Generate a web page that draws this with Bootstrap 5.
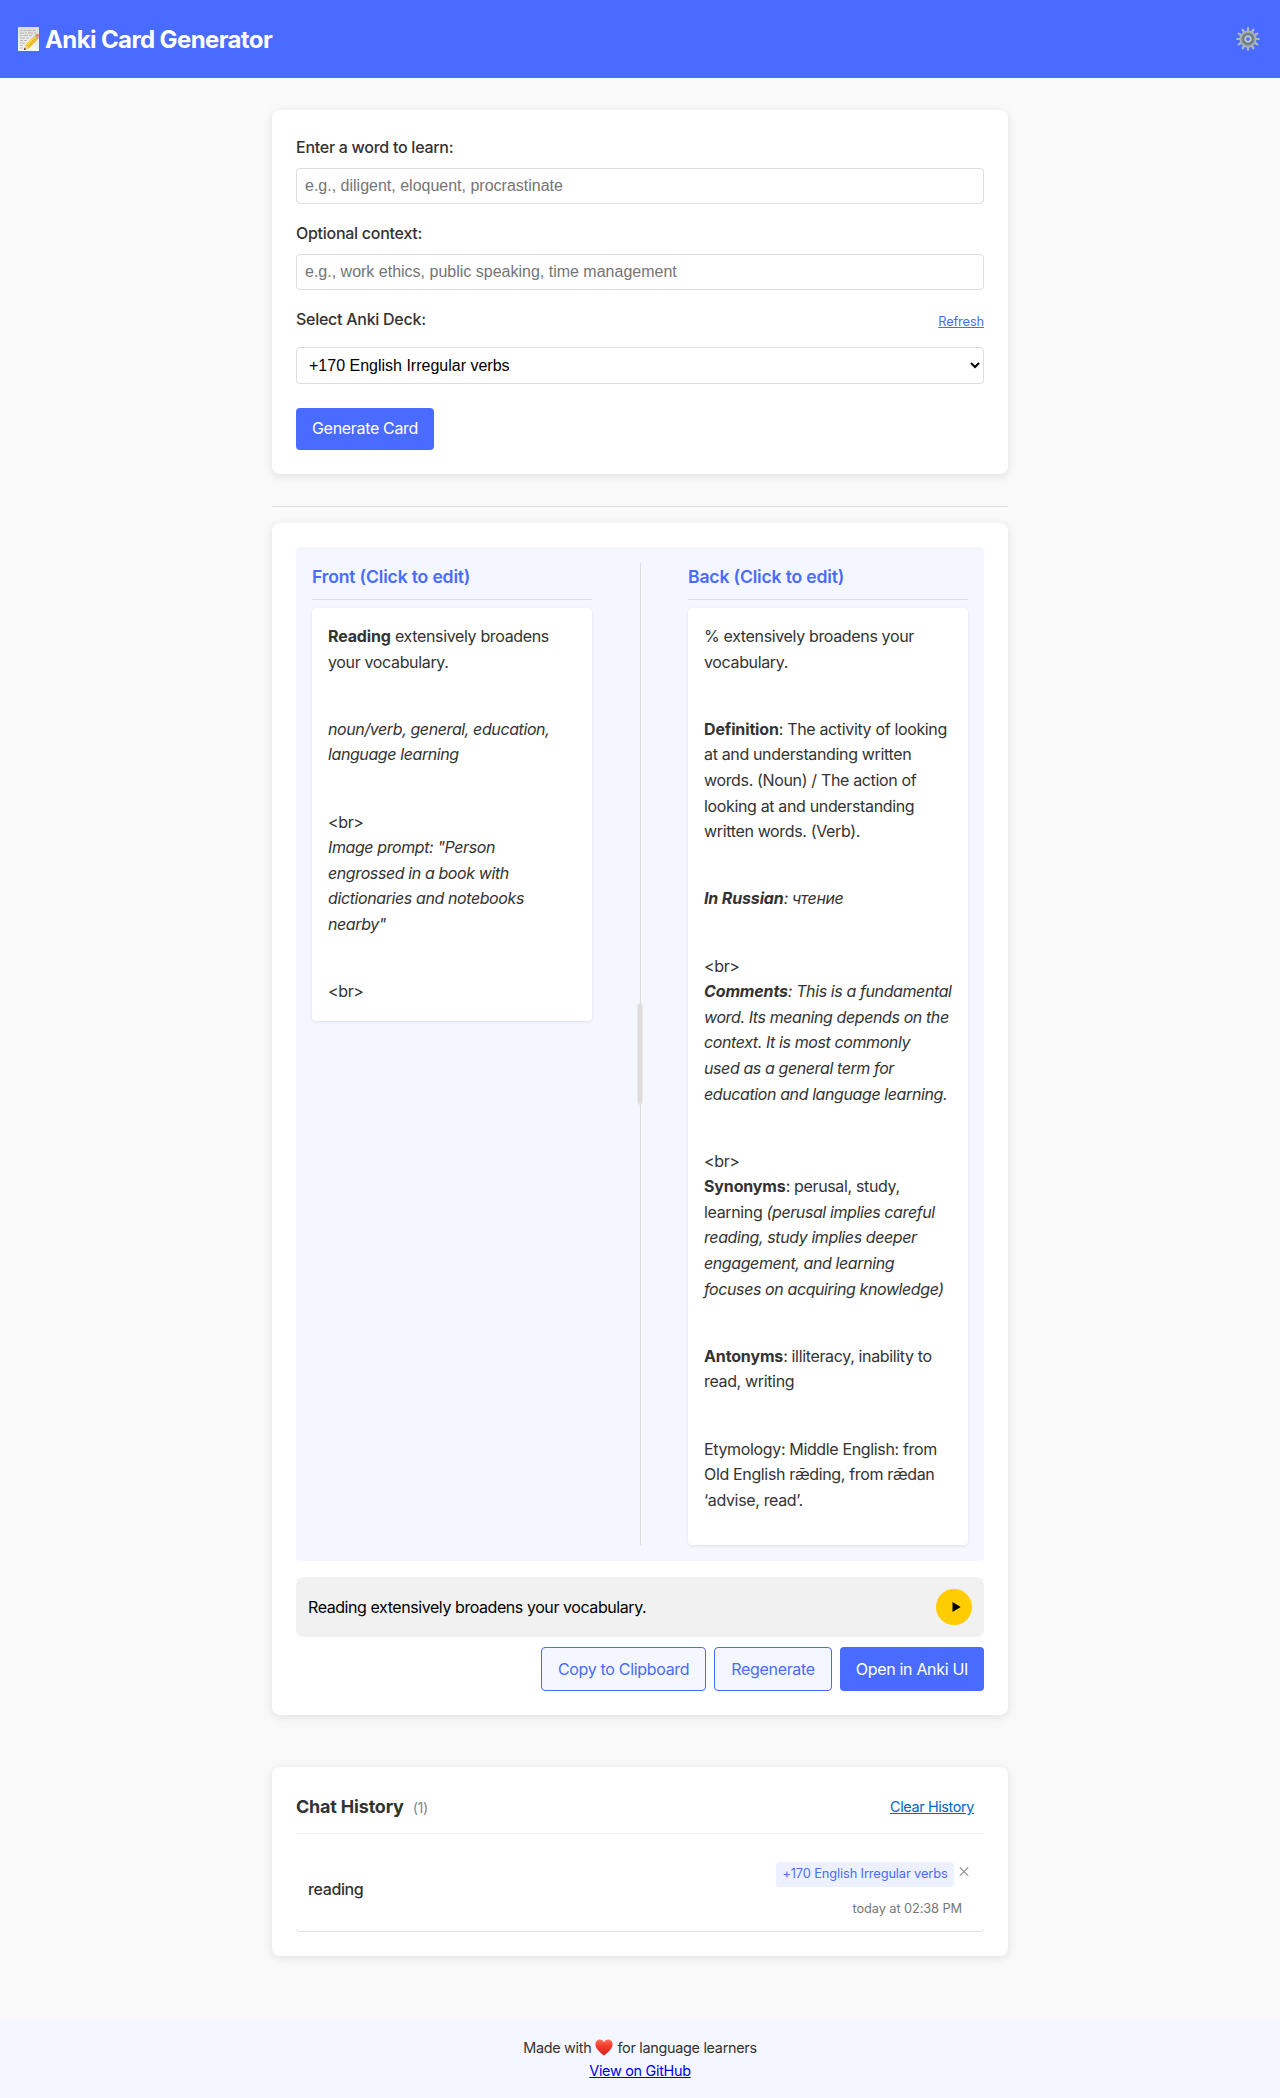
<!DOCTYPE html>
<html lang="en">
<head>
<meta charset="utf-8">
<meta name="viewport" content="width=device-width, initial-scale=1">
<title>Anki Card Generator</title>
<link href="https://cdn.jsdelivr.net/npm/bootstrap@5.3.0/dist/css/bootstrap.min.css" rel="stylesheet">
<style>
:root{--brand:#4a6bff;--pale:#f4f7ff;--line:#ddd}
body{font-family:Inter,"Noto Sans",sans-serif;font-size:16px;line-height:1.6;color:#333;background:#f9f9f9;letter-spacing:-.38px}
.app-header{background:var(--brand);height:78px;padding:0 16px}
.app-title{font-size:24px;font-weight:700;letter-spacing:-.61px;line-height:38px;gap:6px}
.app-title span{padding-top:2px}
.main-col{width:736px;padding-top:32px}
.panel-card{background:#fff;border-radius:8px;padding:24px;box-shadow:0 2px 10px rgba(0,0,0,.1)}
.field-label{font-weight:500;letter-spacing:-.27px;line-height:26px;margin-bottom:8px;display:block}
.field-box{font-family:"Liberation Sans",sans-serif;font-size:16px;line-height:18px;height:36px;padding:8px;border:1px solid var(--line);border-radius:4px;letter-spacing:0;display:block;width:100%;background:#fff;color:#000}
.field-box::placeholder{color:#757575;opacity:1}
select.field-box{height:37px;line-height:normal;margin-top:7px}
.refresh-link{font-size:12.8px;letter-spacing:-.13px;color:var(--brand);line-height:20px;margin-top:6px}
.btn-app{background:var(--brand);color:#fff;border:0;border-radius:4px;padding:0 16px 2px;height:42px;font-size:16px;letter-spacing:-.32px;line-height:1;white-space:nowrap}
.btn-tall{height:44px;padding-bottom:1px}
.btn-line{background:var(--pale);color:var(--brand);border:1px solid var(--brand)}
.divider{height:1px;background:var(--line);margin:32px 0 16px}
.preview{background:var(--pale);border-radius:4px;padding:16px;height:1014px}
.side{width:280px}
.side-title{font-size:17.6px;font-weight:600;color:var(--brand);letter-spacing:-.18px;line-height:28px;padding-bottom:8px;border-bottom:1px solid var(--line);margin-bottom:8px}
.side-body{background:#fff;border-radius:4px;padding:16px;box-shadow:0 1px 3px rgba(0,0,0,.1);white-space:nowrap;letter-spacing:-.35px}
.side-body p{margin:0 0 41.6px}
.side-body b{font-weight:700;letter-spacing:-.14px}
.side-body i{letter-spacing:-.4px}
.side-front{height:413px}
.side-back{height:937px}
.splitter{width:6px}
.splitter-line{width:1px;background:var(--line);left:3px}
.splitter-grip{width:4px;height:100px;background:var(--line);border-radius:3px;outline:1px solid rgba(221,221,221,.6);top:441px;left:1px}
.audio-bar{background:#f1f1f1;border-radius:8px;height:60px;padding:12px;margin:16px 0 10px;color:#000;letter-spacing:-.43px}
.audio-bar span{padding-top:1px}
.play-btn{width:36px;height:36px;background:#fc0;border:0}
.history{margin-top:52px;height:189px}
.history-head{height:43px;border-bottom:1px solid #eee;padding-right:10px}
.history-title{font-size:18px;font-weight:700;letter-spacing:-.2px;line-height:31px}
.history-count{font-size:14.4px;color:#888;margin-left:9px}
.clear-link{font-size:14.4px;color:#06c;letter-spacing:-.37px;line-height:32px}
.history-item{margin-top:16px;height:82px;padding:12px;border-radius:4px;border-bottom:1px solid var(--line)}
.history-word{font-weight:500;padding-bottom:2px}
.deck-tag{font-size:12.8px;color:var(--brand);background:#edf0ff;border-radius:4px;padding:0 6px;height:25px;line-height:24px;letter-spacing:-.11px;width:178px}
.stamp{font-size:12.8px;color:#777;letter-spacing:-.09px;line-height:20px;margin:12px 10px 0 0}
.app-footer{margin-top:64px;height:78px;background:var(--pale);font-size:14.4px;letter-spacing:-.29px;line-height:23px;padding-top:16px}
.app-footer a{color:#00e}
</style>
<script src="https://cdn.jsdelivr.net/npm/bootstrap@5.3.0/dist/js/bootstrap.bundle.min.js"></script>
</head>
<body>
<header class="app-header d-flex align-items-center justify-content-between text-white">
  <h1 class="app-title d-flex align-items-center m-0">
    <svg width="23" height="26" viewBox="0 0 23 26" aria-hidden="true">
      <defs>
        <linearGradient id="paper" x1="0" y1="0" x2="0" y2="1"><stop offset="0" stop-color="#dcdcdc"/><stop offset="1" stop-color="#f6f6f6"/></linearGradient>
        <linearGradient id="wood" x1="0" y1="0" x2="1" y2="1"><stop offset="0" stop-color="#ffe04a"/><stop offset="1" stop-color="#e09a06"/></linearGradient>
      </defs>
      <path d="M2 1h21v24H2z" fill="url(#paper)"/>
      <path d="M4.500 4.500h2m1 0h3m1 0h4m1 0h3M4 7h4m1 0h2m1 0h5m1 0h2M4 9.500h2m1 0h5m1 0h3M4 12h5m1 0h3M4 14.500h3m1 0h3M4 17h5M4 19.500h3M4 22h3" stroke="#aaa" stroke-width=".8" fill="none"/>
      <path d="M8 24l1.500-5.200L18.300 10l3.600 3.300-9.100 9z" fill="url(#wood)"/>
      <path d="M8 24l1.500-5.200 3.300 3.500z" fill="#ecd0a2"/>
      <path d="M8 24l.6-2.300 1.500 1.500z" fill="#222"/>
      <path d="M18.300 10l1-1 3.600 3.300-1 1z" fill="#9fb2b4"/>
      <path d="M19.300 9l.9-.9c.8-.7 1.700-.5 2.600.4v3.700z" fill="#f07f86"/>
      <path d="M10.400 19.600l9-8.800" stroke="#fff0a0" stroke-width=".6"/>
    </svg>
    <span>Anki Card Generator</span>
  </h1>
  <button type="button" class="btn p-0 border-0 lh-1 me-1" aria-label="Settings">
    <svg width="24" height="26" viewBox="-12 -13 24 26">
      <g stroke="#b0b9bc" stroke-width="2.200" stroke-linecap="round">
        <path d="M0-8v-2.800M0 8v2.800M-8 0h-2.800M8 0h2.800"/>
        <path d="M0-8v-2.800M0 8v2.800M-8 0h-2.800M8 0h2.800" transform="rotate(30)"/>
        <path d="M0-8v-2.800M0 8v2.800M-8 0h-2.800M8 0h2.800" transform="rotate(60)"/>
      </g>
      <circle r="7.600" fill="#75858b" stroke="#a8b2b5" stroke-width="2"/>
      <circle r="5" fill="#6d7d84"/>
      <circle r="2.800" fill="#4a6bff" stroke="#c5cdd0" stroke-width="1.800"/>
    </svg>
  </button>
</header>

<main class="main-col mx-auto">
  <section class="panel-card">
    <label class="field-label" for="word">Enter a word to learn:</label>
    <input id="word" class="field-box" placeholder="e.g., diligent, eloquent, procrastinate">
    <label class="field-label mt-3" for="context">Optional context:</label>
    <input id="context" class="field-box" placeholder="e.g., work ethics, public speaking, time management">
    <div class="d-flex justify-content-between mt-3">
      <label class="field-label" for="deck">Select Anki Deck:</label>
      <a class="refresh-link" href="#">Refresh</a>
    </div>
    <select id="deck" class="field-box"><option>+170 English Irregular verbs</option></select>
    <button type="button" class="btn-app mt-4 d-block">Generate Card</button>
  </section>

  <div class="divider"></div>

  <section class="panel-card">
    <div class="preview d-flex justify-content-between">
      <div class="side">
        <h2 class="side-title">Front (Click to edit)</h2>
        <div class="side-body side-front">
          <p><b>Reading</b> extensively broadens<br>your vocabulary.</p>
          <p><i>noun/verb, general, education,<br>language learning</i></p>
          <p>&lt;br&gt;<br><i>Image prompt: "Person<br>engrossed in a book with<br>dictionaries and notebooks<br>nearby"</i></p>
          <p>&lt;br&gt;</p>
        </div>
      </div>
      <div class="splitter position-relative">
        <div class="splitter-line position-absolute h-100"></div>
        <div class="splitter-grip position-absolute"></div>
      </div>
      <div class="side">
        <h2 class="side-title">Back (Click to edit)</h2>
        <div class="side-body side-back">
          <p>% extensively broadens your<br>vocabulary.</p>
          <p><b>Definition</b>: The activity of looking<br>at and understanding written<br>words. (Noun) / The action of<br>looking at and understanding<br>written words. (Verb).</p>
          <p><i><b>In Russian</b>: чтение</i></p>
          <p>&lt;br&gt;<br><i><b>Comments</b>: This is a fundamental<br>word. Its meaning depends on the<br>context. It is most commonly<br>used as a general term for<br>education and language learning.</i></p>
          <p>&lt;br&gt;<br><b>Synonyms</b>: perusal, study,<br>learning <i>(perusal implies careful<br>reading, study implies deeper<br>engagement, and learning<br>focuses on acquiring knowledge)</i></p>
          <p><b>Antonyms</b>: illiteracy, inability to<br>read, writing</p>
          <p>Etymology: Middle English: from<br>Old English rǣding, from rǣdan<br>‘advise, read’.</p>
        </div>
      </div>
    </div>

    <div class="audio-bar d-flex align-items-center justify-content-between">
      <span>Reading extensively broadens your vocabulary.</span>
      <button type="button" class="play-btn rounded-circle p-0 d-flex align-items-center justify-content-center" aria-label="Play">
        <svg class="ms-1" width="9" height="10" viewBox="0 0 9 10"><path d="M.5 0L8.700 5 .5 10z"/></svg>
      </button>
    </div>

    <div class="d-flex justify-content-end gap-2">
      <button type="button" class="btn-app btn-tall btn-line">Copy to Clipboard</button>
      <button type="button" class="btn-app btn-tall btn-line">Regenerate</button>
      <button type="button" class="btn-app btn-tall">Open in Anki UI</button>
    </div>
  </section>

  <section class="panel-card history">
    <div class="history-head d-flex justify-content-between">
      <div class="d-flex align-items-baseline"><h2 class="history-title m-0">Chat History</h2><span class="history-count">(1)</span></div>
      <a class="clear-link" href="#">Clear History</a>
    </div>
    <div class="history-item d-flex justify-content-between">
      <span class="history-word align-self-center">reading</span>
      <div class="d-flex flex-column align-items-end">
        <div class="d-flex">
          <span class="deck-tag text-center">+170 English Irregular verbs</span>
          <svg width="18" height="20" viewBox="0 0 18 20"><path d="M5.800 5.500l8.400 8.400m0-8.400l-8.400 8.400" stroke="#999" stroke-width="1.300"/></svg>
        </div>
        <span class="stamp">today at 02:38 PM</span>
      </div>
    </div>
  </section>
</main>

<footer class="app-footer text-center">
  <div class="d-flex justify-content-center align-items-center">
    <span>Made with</span>
    <svg class="mx-1" width="18" height="17" viewBox="0 0 18 17" aria-hidden="true">
      <defs><linearGradient id="love" x1="0" y1="0" x2="0" y2="1"><stop offset="0" stop-color="#ff7466"/><stop offset=".35" stop-color="#f8402f"/><stop offset="1" stop-color="#d9201c"/></linearGradient></defs>
      <path d="M9 16.500C5.500 13.800.4 10 .4 5.300.4 2.300 2.400.5 4.800.5 6.700.5 8.300 1.600 9 3.200 9.700 1.600 11.300.5 13.200.5c2.400 0 4.400 1.800 4.400 4.800 0 4.700-5.100 8.500-8.600 11.200z" fill="url(#love)"/>
    </svg>
    <span>for language learners</span>
  </div>
  <a href="#">View on GitHub</a>
</footer>
</body>
</html>
